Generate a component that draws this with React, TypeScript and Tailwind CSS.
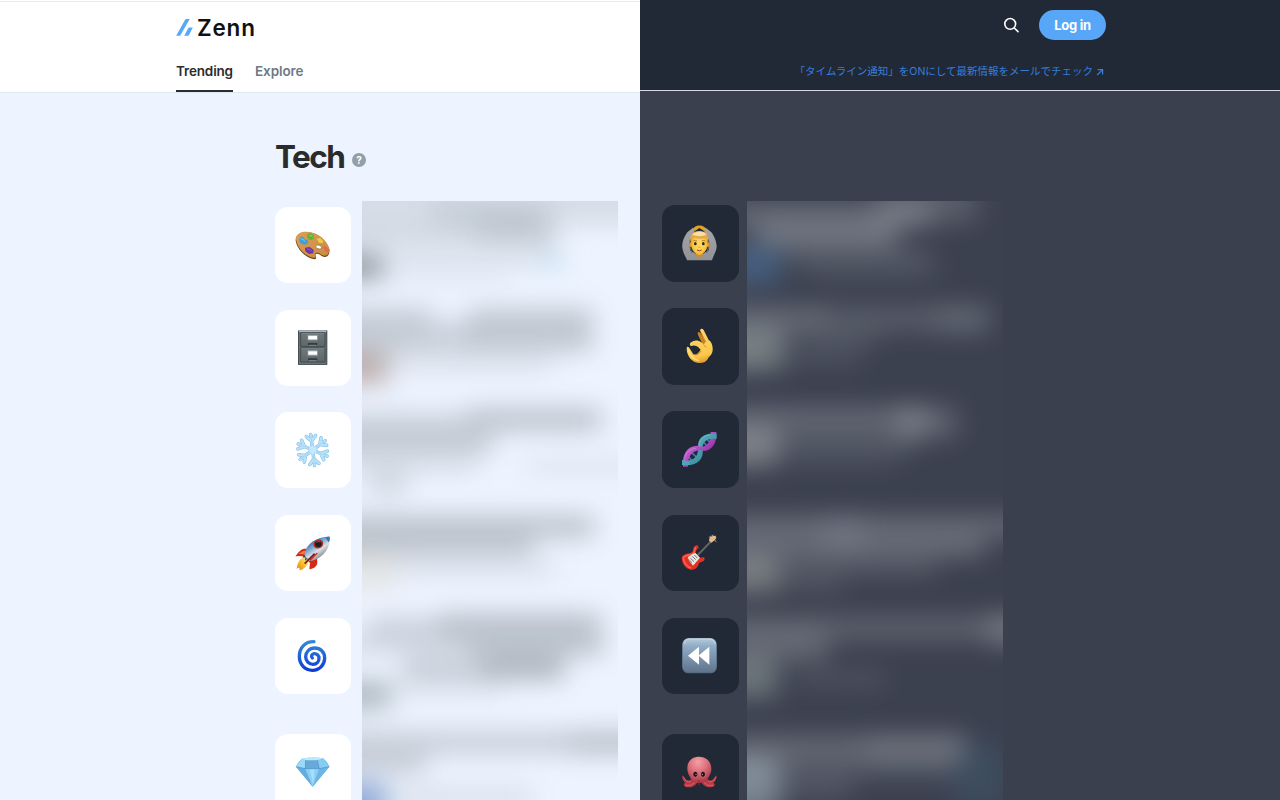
import type { ReactNode } from 'react';

type Smudge = [x: number, y: number, w: number, h: number, fill: string, opacity: number];

function Icon({ children }: { children: ReactNode }) {
  return (
    <svg viewBox="0 0 108 108" className="h-9 w-9 overflow-visible" aria-hidden="true">
      {children}
    </svg>
  );
}

function Palette() {
  return (
    <Icon>
      <defs>
        <linearGradient id="wood" x1="0" y1="0" x2="1" y2="1">
          <stop offset="0" stopColor="#d9a05a" />
          <stop offset="1" stopColor="#c98b3e" />
        </linearGradient>
      </defs>
      <path d="M2 41C1 23 18 13 40 16C68 18 94 39 103 67C105 81 98 91 88 90C78 89 75 79 64 80C57 82 67 91 62 96C46 100 8 75 2 41Z" fill="#6f4519" />
      <path d="M3 37C2 21 19 12 40 15C68 17 94 37 103 65C104 78 97 87 88 86C78 85 75 76 64 77C55 79 66 89 61 92C44 95 8 71 3 37Z" fill="url(#wood)" />
      <ellipse cx="71" cy="60" rx="9" ry="5.5" transform="rotate(15 71 60)" fill="#fff" stroke="#7a4e20" strokeWidth="1.5" />
      <path d="M13 38L16 29L24 29L30 38L39 38L38 50L27 53L15 47Z" fill="#3f9fd6" />
      <path d="M17 35L25 37L29 44" stroke="#79cdf0" strokeWidth="3" fill="none" />
      <path d="M35 25L44 18L56 24L57 35L48 39L38 34Z" fill="#5db233" />
      <path d="M41 27L49 25L52 31" stroke="#91d850" strokeWidth="3" fill="none" />
      <path d="M65 35L76 33L84 41L83 49L72 47Z" fill="#efcb48" />
      <path d="M83 60L91 58L101 67L103 76L93 75Z" fill="#e8665a" />
      <path d="M30 62L44 60L56 69L55 79L42 81L31 73Z" fill="#7034a5" />
      <path d="M36 66L45 67L51 73" stroke="#9858d0" strokeWidth="3" fill="none" />
    </Icon>
  );
}

function Cabinet() {
  const drawers = [8, 54];
  return (
    <Icon>
      <defs>
        <linearGradient id="drawer" x1="0" y1="0" x2="0" y2="1">
          <stop offset="0" stopColor="#6f797c" />
          <stop offset="1" stopColor="#5d6668" />
        </linearGradient>
      </defs>
      <rect x="9" y="1" width="88" height="104" rx="2" fill="#454e51" />
      <rect x="12" y="1" width="82" height="5" fill="#a9b9bf" />
      <rect x="12" y="6" width="82" height="97" fill="#687275" />
      {drawers.map((y) => (
        <g key={y}>
          <rect x="17" y={y} width="73" height="42" rx="1" fill="url(#drawer)" stroke="#3b4446" strokeWidth="2.5" />
          <path d={`M19 ${y + 2}H88`} stroke="#97a2a5" strokeWidth="1.5" />
          <rect x="38" y={y + 7} width="30" height="16" fill="#a2aaac" />
          <rect x="40" y={y + 10} width="26" height="10" fill="#fff" />
          <path d={`M39 ${y + 31}H67V${y + 34}Q67 ${y + 39} 62 ${y + 39}H44Q39 ${y + 39} 39 ${y + 34}Z`} fill="#333c3e" />
          <path d={`M42 ${y + 38}H64`} stroke="#abb5b7" strokeWidth="2" />
        </g>
      ))}
    </Icon>
  );
}

function Snowflake() {
  const arms = [-7, 53, 113, 173, 233, 293];
  const arm = 'M0 0V-47M0 -27L-14 -42M0 -27L14 -42';
  return (
    <Icon>
      <g transform="translate(53 54)" fill="none" strokeLinecap="round" strokeLinejoin="round">
        {arms.map((a) => (
          <path key={a} d={arm} transform={`rotate(${a})`} stroke="#7abbe6" strokeWidth="10.5" />
        ))}
        {arms.map((a) => (
          <path key={a} d={arm} transform={`rotate(${a})`} stroke="#b9e1f8" strokeWidth="7.5" />
        ))}
        {arms.map((a) => (
          <path key={a} d="M0 -12V-42" transform={`rotate(${a})`} stroke="#92ccef" strokeWidth="1.5" />
        ))}
        <path d="M0 -14L12 -7V7L0 14L-12 7V-7Z" fill="#c4e8fc" stroke="#9bd1f0" strokeWidth="1.5" />
      </g>
    </Icon>
  );
}

function Rocket() {
  return (
    <Icon>
      <defs>
        <linearGradient id="hull" x1="0.2" y1="0.2" x2="0.7" y2="0.9">
          <stop offset="0" stopColor="#3569a9" />
          <stop offset="0.3" stopColor="#7aa6d2" />
          <stop offset="0.58" stopColor="#dbe1e2" />
          <stop offset="1" stopColor="#6f777b" />
        </linearGradient>
        <linearGradient id="flame" x1="1" y1="0" x2="0" y2="1">
          <stop offset="0" stopColor="#fff1a0" />
          <stop offset="0.5" stopColor="#f8c12b" />
          <stop offset="1" stopColor="#e87b18" />
        </linearGradient>
      </defs>
      <path d="M1 64C10 52 18 42 28 41L43 41L30 65L16 63Z" fill="#d42b18" />
      <path d="M10 57L26 47L35 48L27 58Z" fill="#f47932" />
      <path d="M66 66L67 83C66 94 56 101 43 103L45 84L37 74Z" fill="#d42b18" />
      <path d="M31 66C16 68 8 81 5 102C13 93 16 102 13 106C25 104 37 94 41 80Z" fill="url(#flame)" />
      <path d="M28 60C32 27 62 5 104 5C107 41 82 71 44 79Z" fill="url(#hull)" />
      <path d="M27 59L43 80L62 66L41 80L39 70L30 77L31 67L23 68Z" fill="#28445d" />
      <path d="M29 86L59 56" stroke="#731b18" strokeWidth="5" />
      <path d="M45 76L67 54" stroke="#d22" strokeWidth="4" />
      <path d="M90 7Q101 4 104 5Q106 14 101 22Z" fill="#4274a8" />
      <ellipse cx="70" cy="27" rx="15" ry="13" transform="rotate(-30 70 27)" fill="#b62920" />
      <ellipse cx="70" cy="27" rx="10" ry="9" fill="#192023" />
      <path d="M64 22Q69 17 76 21" stroke="#64747d" strokeWidth="2.5" fill="none" />
    </Icon>
  );
}

function Cyclone() {
  return (
    <Icon>
      <defs>
        <linearGradient id="swirl" gradientUnits="userSpaceOnUse" x1="54" y1="6" x2="54" y2="102">
          <stop offset="0" stopColor="#378bd6" />
          <stop offset="1" stopColor="#0b3bd6" />
        </linearGradient>
      </defs>
      <path
        d="M57 11C31 10 13 29 13 55C13 80 30 97 52 97C74 97 89 80 89 60C89 42 76 30 59 30C43 30 32 42 32 56C32 69 42 79 54 79C65 79 72 71 72 61C72 52 65 46 57 47C50 48 47 56 52 60"
        fill="none"
        stroke="url(#swirl)"
        strokeWidth="10"
        strokeLinecap="round"
      />
    </Icon>
  );
}

function Gem() {
  return (
    <Icon>
      <path d="M3 38C7 28 14 18 21 14Q52 8 84 13C93 20 99 28 103 38L53 98Z" fill="#6db8e9" />
      <path d="M3 38L21 14L32 18L31 43Z" fill="#9bd9f8" />
      <path d="M32 18L67 18L73 43L31 43Z" fill="#69a9d9" />
      <path d="M67 18L84 13L103 38L73 43Z" fill="#86cdf2" />
      <path d="M21 14Q52 8 84 13L67 19H32Z" fill="#bee8fb" />
      <path d="M3 38L31 45L53 98Z" fill="#63acdf" />
      <path d="M31 45H73L53 98Z" fill="#8dcff2" />
      <path d="M44 46L59 45L55 92Z" fill="#a8dff8" />
      <path d="M73 45L103 38L53 98Z" fill="#6db5e5" />
      <path d="M3 38L31 44H73L103 38M32 18L31 44M67 18L73 44" stroke="#4488c0" strokeWidth="1.5" fill="none" />
    </Icon>
  );
}

function OkPerson() {
  return (
    <Icon>
      <defs>
        <linearGradient id="sleeve" x1="0" y1="0" x2="0" y2="1">
          <stop offset="0" stopColor="#a5a6a9" />
          <stop offset="1" stopColor="#919295" />
        </linearGradient>
        <radialGradient id="face">
          <stop offset="0" stopColor="#ffdc66" />
          <stop offset="0.7" stopColor="#fcc949" />
          <stop offset="1" stopColor="#e9a92f" />
        </radialGradient>
      </defs>
      <path d="M15 106C13 98 3 85 1 68C-1 52 6 36 16 22L33 8L38 18L24 45L24 76L52 93L80 76L80 45L66 18L71 8L88 22C96 32 104 50 104 65C103 80 94 91 90 106Z" fill="url(#sleeve)" />
      <path d="M32 12C38 5 45 1 52 2C60 1 67 5 73 12L66 18L52 9L39 18Z" fill="#e2a325" />
      <path d="M24 46Q21 68 30 84M80 46Q83 68 74 84" stroke="#67686d" strokeWidth="3" fill="none" />
      <path d="M42 82H62V92L52 98L41 92Z" fill="#d28c23" />
      <ellipse cx="26" cy="59" rx="4" ry="7" fill="#dd9a2c" />
      <ellipse cx="78" cy="59" rx="4" ry="7" fill="#dd9a2c" />
      <path d="M27 42Q30 24 52 24Q74 24 77 42L77 62Q73 83 52 91Q31 83 27 62Z" fill="url(#face)" />
      <path d="M26 50C21 32 31 18 52 18C73 18 83 32 78 50C76 45 74 42 72 38C59 43 45 42 34 35C29 40 28 44 26 50Z" fill="#e0a94a" />
      <path d="M31 30C36 18 66 14 73 30C60 35 44 34 31 30Z" fill="#f9dfa3" />
      <ellipse cx="40" cy="56" rx="4" ry="5" fill="#2c2621" />
      <ellipse cx="64" cy="56" rx="4" ry="5" fill="#2c2621" />
      <path d="M34 48Q40 45 45 48M59 48Q65 45 70 48" stroke="#8a5e1d" strokeWidth="2" fill="none" />
      <path d="M49 66Q52 68 55 66" stroke="#c6801d" strokeWidth="2" fill="none" />
      <path d="M45 75Q52 80 59 75" stroke="#914321" strokeWidth="3" fill="none" />
    </Icon>
  );
}

function OkHand() {
  return (
    <Icon>
      <defs>
        <linearGradient id="hand" x1="0.3" y1="0" x2="0.5" y2="1">
          <stop offset="0" stopColor="#ffd66c" />
          <stop offset="0.8" stopColor="#fbc94c" />
          <stop offset="1" stopColor="#e49c28" />
        </linearGradient>
      </defs>
      <path d="M48 18C46 11 52 10 57 18L76 44L63 52Z" fill="#c77e20" />
      <path d="M54 7C56 0 63 1 66 8L80 36Q91 43 92 60C93 74 87 82 80 88C76 97 70 105 54 105C31 105 14 84 14 62C14 53 20 55 24 63L34 79Q44 84 56 65C43 50 35 52 27 54C20 49 25 40 39 38C52 36 62 45 65 50L70 42Z" fill="url(#hand)" />
      <path d="M48 16Q52 31 65 47M57 14Q65 30 72 42M65 51L73 58M37 79Q47 85 58 69" stroke="#c98529" strokeWidth="2.5" fill="none" />
      <path d="M19 65Q28 94 49 97" stroke="#ffe08a" strokeWidth="4" fill="none" strokeLinecap="round" />
    </Icon>
  );
}

function Dna() {
  return (
    <Icon>
      <defs>
        <linearGradient id="teal" x1="0" y1="0" x2="1" y2="1">
          <stop offset="0" stopColor="#65bdc9" />
          <stop offset="1" stopColor="#2d7e91" />
        </linearGradient>
        <linearGradient id="violet" x1="0" y1="0" x2="1" y2="1">
          <stop offset="0" stopColor="#d46bde" />
          <stop offset="1" stopColor="#8c279b" />
        </linearGradient>
      </defs>
      <path d="M58 24L78 44M70 17L90 37M15 70L36 92M27 60L48 80" stroke="#447ec2" strokeWidth="4.5" />
      <path d="M86 0H103C106 36 87 60 58 57L48 45C74 48 88 30 86 0Z" fill="url(#violet)" />
      <path d="M48 47C46 18 66 1 104 5V21C76 17 60 30 62 50C66 80 48 104 0 99V84C30 90 50 76 48 47Z" fill="url(#teal)" />
      <path d="M3 104C-1 62 22 35 58 43L65 56C35 50 15 71 18 104Z" fill="url(#violet)" />
      <path d="M0 85Q13 88 22 86V99Q10 101 0 99Z" fill="#4aa7b5" />
      <path d="M53 44C50 23 66 10 86 8M8 88C7 65 21 51 42 49" stroke="#8bd5df" strokeOpacity=".4" strokeWidth="3" fill="none" />
    </Icon>
  );
}

function Guitar() {
  return (
    <Icon>
      <path d="M43 65L91 15" stroke="#4b4f52" strokeWidth="7" />
      <path d="M44 63L91 15" stroke="#858889" strokeWidth="2.5" />
      <path d="M81 17L83 7L92 3L101 2L103 9L98 16L88 23Z" fill="#e8b883" />
      <path d="M82 7L87 2M89 4L94 0M98 16L103 20" stroke="#b4b3ad" strokeWidth="3" />
      <path d="M47 31C38 30 33 38 33 47C29 58 6 52 0 66C-3 80 8 101 26 104C43 106 48 94 51 85C55 78 66 83 68 72C67 64 60 68 53 68L40 55C41 44 49 43 50 37Z" fill="#e03028" />
      <path d="M42 37C34 40 43 53 30 58C17 61 4 61 4 70C5 82 16 97 28 99" stroke="#ff5b48" strokeWidth="5" fill="none" />
      <path d="M40 53L31 58L17 67Q21 79 33 92L46 77L54 68Z" fill="#e9e7df" />
      <path d="M25 69L36 80M31 64L41 74M37 60L46 69" stroke="#5c6062" strokeWidth="2.5" />
      <path d="M21 74L29 84" stroke="#a2a3a2" strokeWidth="4" />
    </Icon>
  );
}

function Rewind() {
  return (
    <Icon>
      <defs>
        <linearGradient id="key" x1="0" y1="0" x2="0" y2="1">
          <stop offset="0" stopColor="#b8ccdc" />
          <stop offset="0.22" stopColor="#91adc7" />
          <stop offset="1" stopColor="#60748c" />
        </linearGradient>
      </defs>
      <rect x="0" y="0" width="105" height="106" rx="20" fill="#536a80" />
      <rect x="2" y="1" width="101" height="102" rx="18" fill="url(#key)" />
      <path d="M8 18Q9 4 22 3H84Q97 4 98 18" fill="none" stroke="#d5e1e9" strokeWidth="2" />
      <path d="M18 53L51 26V52L82 26V80L51 54V80Z" fill="#fff" />
    </Icon>
  );
}

function Octopus() {
  return (
    <Icon>
      <defs>
        <radialGradient id="squid" cx="45%" cy="20%" r="80%">
          <stop offset="0" stopColor="#f4a1a6" />
          <stop offset="0.45" stopColor="#dd7480" />
          <stop offset="1" stopColor="#a83644" />
        </radialGradient>
      </defs>
      <path d="M30 74C17 85 11 78 4 65C-2 62 0 80 10 86C1 91 6 99 18 100C31 101 42 94 46 85H58C63 94 72 101 86 100C98 98 102 91 94 86C105 80 106 62 101 65C93 78 88 85 75 74Z" fill="#b93a47" />
      <path d="M5 70Q12 86 26 83M101 70Q93 87 79 83M10 94Q27 98 38 86M94 94Q77 98 66 86" stroke="#d9636e" strokeWidth="3" fill="none" />
      <path d="M16 43C16 20 31 8 52 8C73 8 88 23 88 45C88 59 80 69 75 78C68 86 61 82 57 87H46C41 82 34 84 28 76C23 67 16 59 16 43Z" fill="url(#squid)" />
      <ellipse cx="40" cy="61" rx="8" ry="10" fill="#c96773" />
      <ellipse cx="63" cy="61" rx="8" ry="10" fill="#c96773" />
      <ellipse cx="40" cy="61" rx="6" ry="8" fill="#22110f" />
      <ellipse cx="63" cy="61" rx="6" ry="8" fill="#22110f" />
      <circle cx="42" cy="61" r="1.5" fill="#fff" />
      <circle cx="61" cy="61" r="1.5" fill="#fff" />
      <path d="M51 77V94" stroke="#8a2b3b" strokeWidth="3" />
    </Icon>
  );
}

const INK = '#30373c';
const lightSmudges: Smudge[] = [
  [-60, -60, 380, 84, INK, 0.12],
  [70, 0, 115, 24, INK, 0.1],
  [-60, 24, 255, 20, INK, 0.14],
  [112, 16, 78, 28, INK, 0.09],
  [-60, 48, 255, 18, INK, 0.09],
  [176, 50, 28, 22, '#8fc8ea', 0.2],
  [-60, 53, 80, 27, '#4d5457', 0.5],
  [10, 70, 140, 14, INK, 0.05],
  [-60, 107, 130, 44, INK, 0.21],
  [70, 120, 40, 32, INK, 0.18],
  [107, 107, 124, 44, INK, 0.23],
  [-20, 154, 210, 17, INK, 0.09],
  [-60, 149, 86, 36, '#8f695a', 0.42],
  [-60, 211, 165, 24, INK, 0.16],
  [105, 206, 134, 25, INK, 0.24],
  [-60, 231, 190, 23, INK, 0.21],
  [-60, 256, 175, 17, INK, 0.1],
  [165, 257, 150, 16, INK, 0.08],
  [8, 268, 36, 26, INK, 0.14],
  [-60, 313, 292, 25, INK, 0.24],
  [-60, 336, 232, 20, INK, 0.22],
  [-60, 353, 94, 35, '#cfc8ad', 0.32],
  [34, 359, 160, 17, INK, 0.09],
  [5, 415, 80, 22, INK, 0.17],
  [80, 411, 159, 27, INK, 0.25],
  [-60, 436, 165, 16, INK, 0.15],
  [105, 436, 137, 20, INK, 0.23],
  [40, 455, 162, 25, INK, 0.19],
  [120, 453, 82, 27, INK, 0.14],
  [-60, 480, 88, 30, '#6e7b80', 0.42],
  [-10, 478, 150, 18, INK, 0.07],
  [-60, 529, 380, 25, INK, 0.18],
  [208, 529, 90, 26, INK, 0.09],
  [-60, 552, 124, 21, INK, 0.19],
  [-60, 581, 84, 80, '#4a72b8', 0.55],
  [27, 585, 144, 22, INK, 0.09],
];

const CHALK = '#d2d8da';
const darkSmudges: Smudge[] = [
  [-60, 0, 245, 27, CHALK, 0.25],
  [130, -30, 100, 53, CHALK, 0.18],
  [8, 23, 143, 24, CHALK, 0.33],
  [40, 47, 145, 20, CHALK, 0.15],
  [60, 64, 130, 16, CHALK, 0.08],
  [-60, 44, 94, 40, '#5288bd', 0.4],
  [-60, 104, 136, 25, CHALK, 0.25],
  [72, 103, 170, 29, CHALK, 0.16],
  [190, 102, 52, 33, CHALK, 0.08],
  [20, 130, 110, 16, CHALK, 0.13],
  [-60, 126, 94, 44, '#aeb9b2', 0.5],
  [34, 148, 80, 18, CHALK, 0.1],
  [-60, 204, 240, 28, CHALK, 0.24],
  [150, 205, 60, 33, CHALK, 0.22],
  [-10, 234, 180, 18, CHALK, 0.17],
  [-60, 226, 92, 41, '#b5b6b5', 0.45],
  [40, 252, 110, 16, CHALK, 0.08],
  [-60, 313, 400, 24, CHALK, 0.25],
  [74, 312, 44, 40, CHALK, 0.09],
  [-60, 336, 298, 21, CHALK, 0.27],
  [-10, 358, 200, 18, CHALK, 0.15],
  [-60, 355, 91, 38, '#b8b9b2', 0.42],
  [30, 373, 65, 20, CHALK, 0.1],
  [-60, 416, 132, 24, CHALK, 0.26],
  [70, 413, 250, 28, CHALK, 0.19],
  [240, 412, 90, 34, CHALK, 0.19],
  [-20, 438, 102, 23, CHALK, 0.23],
  [-60, 456, 91, 41, '#a7b3ad', 0.44],
  [50, 468, 90, 20, CHALK, 0.1],
  [-60, 532, 280, 25, CHALK, 0.23],
  [120, 532, 95, 30, CHALK, 0.1],
  [-20, 555, 230, 21, CHALK, 0.17],
  [-60, 556, 93, 56, '#adc0c8', 0.54],
  [207, 545, 52, 60, '#4a86a6', 0.17],
  [30, 575, 75, 24, CHALK, 0.12],
];

function Preview({ id, base, smudges }: { id: string; base: string; smudges: Smudge[] }) {
  return (
    <svg viewBox="0 0 256 599" className="block h-[599px] w-64 shrink-0 overflow-hidden" aria-hidden="true">
      <defs>
        <filter id={id} filterUnits="userSpaceOnUse" x="-80" y="-80" width="420" height="760" colorInterpolationFilters="sRGB">
          <feGaussianBlur stdDeviation="13 11.5" />
        </filter>
      </defs>
      <rect width="256" height="599" fill={base} />
      <g filter={`url(#${id})`}>
        {smudges.map(([x, y, w, h, fill, opacity], i) => (
          <rect key={i} x={x} y={y} width={w} height={h} rx="3" fill={fill} fillOpacity={opacity} />
        ))}
      </g>
    </svg>
  );
}

const lightIcons = [Palette, Cabinet, Snowflake, Rocket, Cyclone, Gem];
const darkIcons = [OkPerson, OkHand, Dna, Guitar, Rewind, Octopus];

function LightPane() {
  return (
    <section className="h-[800px] overflow-hidden bg-[#edf4ff]">
      <header className="flex h-[93px] flex-col border-b border-[#e1e9f0] bg-white">
        <div className="mt-px h-px shrink-0 bg-[#e9eaeb]" />
        <a className="mt-[13px] flex h-6 items-center pl-44">
          <svg viewBox="0 0 18 18" className="h-[18px] w-[18px]" aria-hidden="true">
            <path d="M.2 17.8H4.1L13.8 1.1H10.4Q9.4 1.1 8.9 1.9Z" fill="#57a8fb" />
            <path d="M8.2 17.8H11.9Q12.6 17.8 13 17.1L16.8 9.6H13.3Q12.6 9.6 12.2 10.2Z" fill="#57a8fb" />
          </svg>
          <span className="ml-[3px] pt-px text-[22.5px] leading-6 font-semibold tracking-[0.8px] text-[#111]">Zenn</span>
        </a>
        <nav className="mt-auto flex gap-[22px] pl-44 text-[13.5px] leading-[21px] font-semibold">
          <a className="h-[31px] w-[57px] border-b-2 border-[#292d32] tracking-[-0.15px] text-[#292b2e]">Trending</a>
          <a className="h-[31px] tracking-[-0.1px] text-[#6e7985]">Explore</a>
        </nav>
      </header>
      <main>
        <div className="flex h-[108px] items-start gap-[7px] pt-[44px] pl-[275px]">
          <h1 className="w-[70px] text-[31.5px] leading-10 font-bold tracking-[-1.5px] text-[#292b2c]">Tech</h1>
          <span className="mt-[16px] flex h-[14px] w-[14px] items-center justify-center rounded-full bg-[#929fa9] text-[10px] leading-none font-bold text-white">?</span>
        </div>
        <div className="flex gap-[11px] pl-[275px]">
          <div className="flex w-[76px] flex-col gap-[26.8px] pt-[5.9px]">
            {lightIcons.map((Glyph, i) => (
              <div key={i} className="flex h-[76px] w-[76px] shrink-0 items-center justify-center rounded-[13px] bg-white last:mt-[13.2px]">
                <Glyph />
              </div>
            ))}
          </div>
          <Preview id="soft-light" base="#edf4ff" smudges={lightSmudges} />
        </div>
      </main>
    </section>
  );
}

function DarkPane() {
  return (
    <section className="h-[800px] overflow-hidden bg-[#3b404f]">
      <header className="flex h-[91px] flex-col items-end border-b border-[#d8dbe5] bg-[#222936] pt-[10px] pr-[174px]">
        <div className="flex items-center gap-5">
          <svg viewBox="0 0 16 16" className="h-4 w-4" fill="none" stroke="#fff" strokeWidth="1.6" strokeLinecap="round" aria-hidden="true">
            <circle cx="7.2" cy="6.9" r="5.4" />
            <path d="M11.3 11L15 14.6" />
          </svg>
          <button className="h-[30px] w-[67px] rounded-full bg-[#58a6f8] text-[13px] leading-5 font-bold tracking-[-0.25px] text-white">Log in</button>
        </div>
        <a className="mt-[23px] mr-[2px] flex items-center gap-[3px] text-[10.5px] leading-[17px] whitespace-nowrap text-[#347edc]">
          「タイムライン通知」をONにして最新情報をメールでチェック
          <svg viewBox="0 0 8 8" className="h-2 w-2" fill="none" stroke="currentColor" strokeWidth="1.3" aria-hidden="true">
            <path d="M1.6 1.6H6.6V6.6M6.6 1.6L1.2 7" />
          </svg>
        </a>
      </header>
      <main className="flex gap-2 pt-[110px] pl-[22px]">
        <div className="flex w-[77px] flex-col gap-[26.7px] pt-[4px]">
          {darkIcons.map((Glyph, i) => (
            <div key={i} className="flex h-[76.5px] w-[77px] shrink-0 items-center justify-center rounded-[13px] bg-[#222936] pr-[1.5px] last:mt-[13px]">
              <Glyph />
            </div>
          ))}
        </div>
        <Preview id="soft-dark" base="#3c4150" smudges={darkSmudges} />
      </main>
    </section>
  );
}

export default function App() {
  return (
    <div className="grid h-[800px] w-[1280px] grid-cols-2 overflow-hidden font-['Inter','Noto_Sans_CJK_JP',sans-serif]">
      <LightPane />
      <DarkPane />
    </div>
  );
}
